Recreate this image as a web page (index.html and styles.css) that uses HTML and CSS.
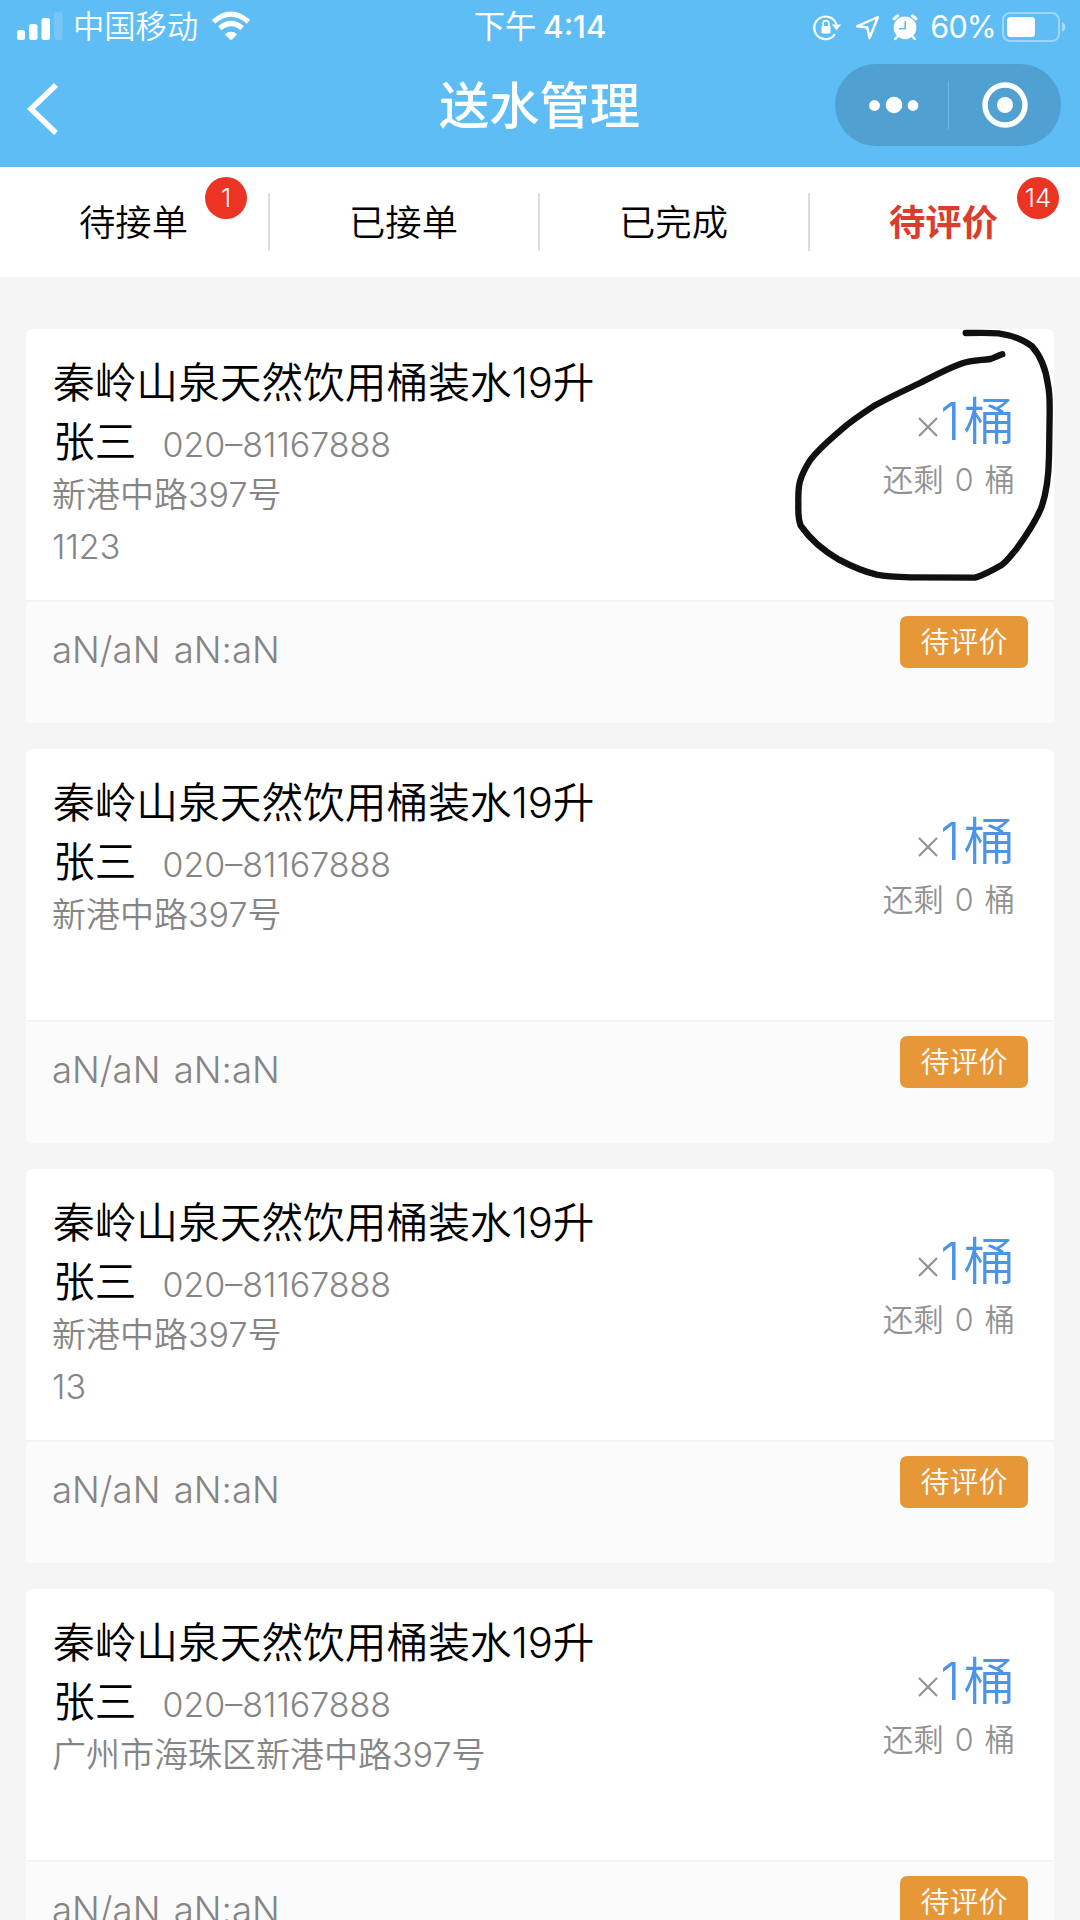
FILE: index.html
```html
<!DOCTYPE html>
<html lang="zh-CN">
<head>
<meta charset="utf-8">
<title>送水管理</title>
<link rel="stylesheet" href="styles.css">
</head>
<body>
<header class="header">
  <div class="status">
    <div class="status-left">
      <svg class="signal" width="46" height="30" viewBox="0 0 46 30"><g fill="#fff"><rect x="0" y="18" width="8" height="10" rx="2.5"/><rect x="12" y="12" width="8.500" height="16" rx="2.500"/><rect x="24.500" y="6" width="8.500" height="22" rx="2.500"/><rect x="37" y="0" width="8.500" height="28" rx="2.500" opacity=".16"/></g></svg>
      <span class="carrier">中国移动</span>
      <svg class="wifi" width="40" height="30" viewBox="0 0 40 30"><g fill="none" stroke="#fff" stroke-width="5.200"><path d="M2.600 10.800Q20-4.600 37.400 10.800"/><path d="M8.800 17.200Q20 7.800 31.200 17.200"/></g><path d="M13.800 23.200Q20 18.400 26.200 23.200L21.300 28.300Q20 29.400 18.700 28.300Z" fill="#fff"/></svg>
    </div>
    <div class="clock"><span class="noon">下午</span><span class="time">4:14</span></div>
    <div class="status-right">
      <svg class="rotation" width="28" height="27" viewBox="0 0 28 27"><path d="M23.300 10.500A11.300 11.300 0 1 0 22 20" fill="none" stroke="#fff" stroke-width="2.200"/><path d="M19 10.500H28L23.600 16.500Z" fill="#fff"/><rect x="8.500" y="12" width="9" height="7.500" rx="1" fill="#fff"/><path d="M10.100 12.500V9.500a2.900 2.900 0 0 1 5.800 0v3" fill="none" stroke="#fff" stroke-width="1.600"/></svg>
      <svg class="location" width="25" height="25" viewBox="0 0 25 25"><path d="M23 2L2 11.300L12.300 12.500L14.500 23Z" fill="none" stroke="#fff" stroke-width="2.400" stroke-linejoin="round"/></svg>
      <svg class="alarm" width="26" height="27" viewBox="0 0 26 27"><g stroke="#fff" stroke-width="3.200" stroke-linecap="round"><path d="M2.200 4.700L5.500 2M23.800 4.700L20.500 2"/><path d="M5 23L3.200 25M21 23L22.800 25" stroke-width="2.400"/></g><circle cx="13" cy="13.800" r="11.400" fill="#fff"/><path d="M13.200 7V14.800H7" fill="none" stroke="#5ebdf5" stroke-width="1.600"/></svg>
      <span class="percent">60%</span>
      <svg class="battery" width="64" height="30" viewBox="0 0 64 30"><rect x="1" y="1" width="56" height="28" rx="7" fill="none" stroke="#fff" stroke-width="2" opacity=".4"/><rect x="5" y="5" width="28" height="20" rx="3.500" fill="#fff"/><path d="M60 10Q63.500 12 63.500 15T60 20Z" fill="#fff" opacity=".45"/></svg>
    </div>
  </div>
  <div class="nav">
    <svg class="back" width="32" height="54" viewBox="0 0 32 54"><path d="M29 3L4 27L29 51" fill="none" stroke="#fff" stroke-width="5.600"/></svg>
    <h1 class="page-title">送水管理</h1>
    <div class="capsule">
      <svg class="dots" width="50" height="18" viewBox="0 0 50 18"><g fill="#fff"><circle cx="5.500" cy="9.500" r="5.400"/><circle cx="25" cy="9" r="8.300"/><circle cx="44" cy="9.500" r="5.400"/></g></svg>
      <span class="capsule-line"></span>
      <svg class="target" width="46" height="46" viewBox="0 0 46 46"><circle cx="23" cy="23" r="20" fill="none" stroke="#fff" stroke-width="5.400"/><circle cx="23" cy="23" r="8" fill="#fff"/></svg>
    </div>
  </div>
</header>
<nav class="tabs">
  <div class="tab"><span>待接单</span><b class="badge">1</b></div>
  <div class="tab"><span>已接单</span></div>
  <div class="tab"><span>已完成</span></div>
  <div class="tab active"><span>待评价</span><b class="badge">14</b></div>
</nav>
<main class="orders">
  <article class="card">
    <div class="card-body">
      <div class="info">
        <h2 class="product">秦岭山泉天然饮用桶装水<span class="num">19</span>升</h2>
        <div class="customer"><span class="name">张三</span><span class="phone">020–81167888</span></div>
        <div class="line">新港中路<span class="num">397</span>号</div>
        <div class="line">1123</div>
      </div>
      <div class="quantity">
        <div class="count"><svg class="times" width="20" height="20" viewBox="0 0 20 20"><path d="M1 1L19 19M19 1L1 19"/></svg><span class="one">1</span><span>桶</span></div>
        <div class="left"><span>还剩</span><span class="zero">0</span><span>桶</span></div>
      </div>
    </div>
    <footer class="card-foot"><span class="date">aN/aN aN:aN</span><button class="review">待评价</button></footer>
    <svg class="scribble" width="320" height="290" viewBox="0 0 960 870"><path d="M617 69C660 68 693 68 716 70C757 76 791 89 815 108C842 137 858 180 864 225C870 254 869 275 869 310L867 440C866 505 857 555 845 590C827 636 799 676 770 716C751 739 741 754 725 765C699 780 667 797 645 803L450 802C408 801 375 799 350 794C304 783 267 765 237 749C193 724 150 687 122 647C113 623 115 606 115 580C114 528 116 505 150 451C177 415 213 386 245 358C271 335 306 311 340 289C385 263 430 243 480 219C520 199 558 177 603 161C634 150 664 151 691 147C705 142 714 137 727 133"/></svg>
  </article>
  <article class="card">
    <div class="card-body">
      <div class="info">
        <h2 class="product">秦岭山泉天然饮用桶装水<span class="num">19</span>升</h2>
        <div class="customer"><span class="name">张三</span><span class="phone">020–81167888</span></div>
        <div class="line">新港中路<span class="num">397</span>号</div>
      </div>
      <div class="quantity">
        <div class="count"><svg class="times" width="20" height="20" viewBox="0 0 20 20"><path d="M1 1L19 19M19 1L1 19"/></svg><span class="one">1</span><span>桶</span></div>
        <div class="left"><span>还剩</span><span class="zero">0</span><span>桶</span></div>
      </div>
    </div>
    <footer class="card-foot"><span class="date">aN/aN aN:aN</span><button class="review">待评价</button></footer>
  </article>
  <article class="card">
    <div class="card-body">
      <div class="info">
        <h2 class="product">秦岭山泉天然饮用桶装水<span class="num">19</span>升</h2>
        <div class="customer"><span class="name">张三</span><span class="phone">020–81167888</span></div>
        <div class="line">新港中路<span class="num">397</span>号</div>
        <div class="line">13</div>
      </div>
      <div class="quantity">
        <div class="count"><svg class="times" width="20" height="20" viewBox="0 0 20 20"><path d="M1 1L19 19M19 1L1 19"/></svg><span class="one">1</span><span>桶</span></div>
        <div class="left"><span>还剩</span><span class="zero">0</span><span>桶</span></div>
      </div>
    </div>
    <footer class="card-foot"><span class="date">aN/aN aN:aN</span><button class="review">待评价</button></footer>
  </article>
  <article class="card">
    <div class="card-body">
      <div class="info">
        <h2 class="product">秦岭山泉天然饮用桶装水<span class="num">19</span>升</h2>
        <div class="customer"><span class="name">张三</span><span class="phone">020–81167888</span></div>
        <div class="line">广州市海珠区新港中路<span class="num">397</span>号</div>
      </div>
      <div class="quantity">
        <div class="count"><svg class="times" width="20" height="20" viewBox="0 0 20 20"><path d="M1 1L19 19M19 1L1 19"/></svg><span class="one">1</span><span>桶</span></div>
        <div class="left"><span>还剩</span><span class="zero">0</span><span>桶</span></div>
      </div>
    </div>
    <footer class="card-foot"><span class="date">aN/aN aN:aN</span><button class="review">待评价</button></footer>
  </article>
</main>
</body>
</html>
```
FILE: styles.css
```css
* { box-sizing: border-box; }
body {
  margin: 0;
  width: 1080px;
  height: 1920px;
  overflow: hidden;
  background: #f5f5f5;
  color: #000;
  font-family: Inter, "Noto Sans CJK SC", sans-serif;
  font-weight: 350;
}
svg { display: block; flex: none; }
h1, h2 { margin: 0; font-weight: inherit; }

.header { height: 167px; background: #5ebdf5; color: #fff; }
.status {
  display: grid;
  grid-template-columns: 1fr auto 1fr;
  height: 54px;
  padding: 0 14px 0 17px;
  line-height: 54px;
  font-size: 31.3px;
}
.status-left, .clock, .status-right { display: flex; align-items: center; }
.status-right { justify-content: flex-end; }
.carrier { margin-left: 10px; }
.wifi { margin-left: 13px; margin-top: -3px; }
.clock { gap: 7px; margin-left: -3px; }
.noon { font-weight: 400; }
.time { font-size: 31px; font-weight: 500; }
.location { margin-left: 14px; }
.alarm { margin-left: 12px; }
.percent { margin: 0 6px 0 12px; font-size: 30.5px; font-weight: 400; letter-spacing: -0.8px; }

.nav {
  display: grid;
  grid-template-columns: 1fr auto 1fr;
  align-items: center;
  height: 101px;
  padding: 0 19px 0 27px;
}
.back { margin-top: 9px; }
.page-title { margin-left: -9px; padding-top: 3px; font-size: 50.3px; font-weight: 500; line-height: 98px; }
.capsule {
  justify-self: end;
  display: flex;
  align-items: center;
  width: 226px;
  height: 82px;
  padding-left: 34px;
  border-radius: 41px;
  background: #50a1d2;
}
.capsule-line { width: 1px; height: 48px; margin: 0 33px 0 29px; background: #72b8e1; }

.tabs {
  display: grid;
  grid-template-columns: repeat(4, 1fr);
  height: 110px;
  background: #fff;
  font-size: 36.3px;
}
.tab {
  position: relative;
  display: flex;
  align-items: center;
  justify-content: center;
  padding: 0 3px 4px 0;
}
.tab:not(:last-child)::after {
  content: "";
  position: absolute;
  right: 0;
  top: 26px;
  width: 2px;
  height: 58px;
  background: #dcdcdc;
}
.active { color: #dc3c2d; font-weight: 600; }
.badge {
  position: absolute;
  right: 23px;
  top: 10px;
  width: 42px;
  height: 42px;
  border-radius: 50%;
  background: #eb3424;
  color: #fff;
  font-size: 26px;
  font-weight: 300;
  line-height: 41px;
  text-align: center;
}
.active .badge { right: 21px; }

.orders { display: flex; flex-direction: column; gap: 26px; padding: 52px 26px 0; }
.card { position: relative; flex: none; height: 394px; border-radius: 6px; background: #fff; }
.card-body { display: flex; justify-content: space-between; height: 271px; padding: 24px 39px 0 27px; }
.product { height: 60px; font-size: 41.7px; line-height: 60px; }
.product .num { font-weight: 300; letter-spacing: -0.2px; }
.customer { display: flex; height: 58px; align-items: center; }
.name { font-size: 41.7px; line-height: 58px; }
.phone { margin-left: 26px; padding-top: 5px; font-size: 34px; line-height: 58px; }
.line { position: relative; top: -2px; left: -1px; height: 52px; font-size: 34px; line-height: 52px; }
.phone, .line, .date { color: #858585; }
.line .num, .phone, .date { font-weight: 300; }
.quantity { padding-top: 34px; }
.count { display: flex; align-items: center; justify-content: flex-end; height: 66px; padding-top: 1px; font-size: 51.5px; line-height: 66px; color: #4c94e8; }
.one { font-weight: 300; margin-right: 3px; }
.times { margin: 13px 2px 0 0; fill: none; stroke: #929292; stroke-width: 2.2; }
.left { display: flex; justify-content: flex-end; height: 54px; font-size: 30.5px; line-height: 54px; color: #929292; }
.zero { margin: 0 11px; font-weight: 300; }
.card-foot {
  display: flex;
  align-items: flex-start;
  justify-content: space-between;
  height: 123px;
  padding: 14px 26px 0 26px;
  border-top: 2px solid #f4f4f4;
  border-radius: 0 0 6px 6px;
  background: #fbfbfb;
}
.date { font-size: 36.6px; line-height: 69px; word-spacing: 3px; }
.review {
  width: 128px;
  height: 52px;
  padding: 1px 0 0;
  border: 0;
  border-radius: 7px;
  background: #e69838;
  color: #fff;
  font: 350 29px/52px Inter, "Noto Sans CJK SC", sans-serif;
}
.scribble {
  position: absolute;
  left: 734px;
  top: -19px;
  fill: none;
  stroke: #101010;
  stroke-width: 19;
  stroke-linecap: round;
  stroke-linejoin: round;
}
```
